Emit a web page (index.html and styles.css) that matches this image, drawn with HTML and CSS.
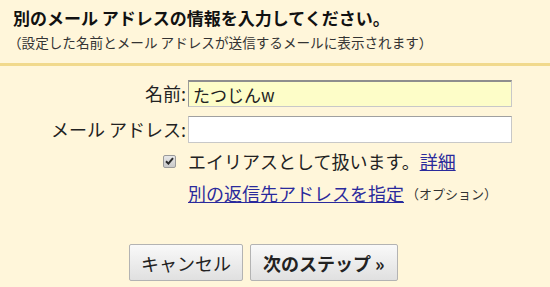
FILE: index.html
```html
<!DOCTYPE html>
<html lang="ja">
<head>
    <meta charset="UTF-8">
    <title>別のメール アドレス</title>
    <link rel="stylesheet" href="styles.css">
</head>
<body>
    <div class="dialog">
        <div class="head">
            <h1>別のメール アドレスの情報を入力してください。</h1>
            <p>（設定した名前とメール アドレスが送信するメールに表示されます）</p>
        </div>

        <form class="fields" action="#">
            <label for="name">名前:</label>
            <input id="name" class="text filled" type="text" value="たつじんw">
            <label for="mail">メール アドレス:</label>
            <input id="mail" class="text" type="text">

            <div class="opt">
                <span class="check">
                    <svg width="9" height="8" viewBox="0 0 9 8"><path d="M1 4.2 L3.4 6.6 L8 1.2" fill="none" stroke="#2b2b2b" stroke-width="2"/></svg>
                </span>
                <span>エイリアスとして扱います。</span><a href="#">詳細</a>
            </div>
            <div class="opt reply">
                <a href="#">別の返信先アドレスを指定</a><span class="note">（オプション）</span>
            </div>
        </form>

        <div class="buttons">
            <button type="button">キャンセル</button>
            <button type="button" class="next">次のステップ »</button>
        </div>
    </div>
</body>
</html>
```

FILE: styles.css
```css
body {
    margin: 0;
    background-color: #fff6da;
    font-family: "Noto Sans CJK JP", "Noto Sans", sans-serif;
    color: #222;
}

.dialog {
    width: 550px;
    height: 287px;
    overflow: hidden;
}

.head {
    padding: 7px 13px 11px;
    border-bottom: 3px solid #f1d98c;
}

.head h1 {
    margin: 0;
    font-size: 17px;
    line-height: 22px;
    font-weight: bold;
    color: #111;
}

.head p {
    margin: 3px 0 0 -5px;
    font-size: 13.6px;
    line-height: 20px;
    color: #333;
}

.fields {
    display: grid;
    grid-template-columns: 186px 324px;
    column-gap: 2px;
    row-gap: 9px;
    margin-top: 14px;
    font-size: 18px;
}

.fields label {
    text-align: right;
    line-height: 27px;
}

.text {
    box-sizing: border-box;
    height: 27px;
    margin: 0;
    padding: 0 4px;
    font: inherit;
    font-size: 17px;
    color: #222;
    background: #fff;
    border: 1px solid #c8c8c8;
    border-top-color: #a0a0a0;
    outline: none;
}

.text.filled {
    background: #fdfdc8;
    border-top: 2px solid #8e8e8e;
    border-left-color: #9a9a9a;
}

.opt {
    grid-column: 2;
    display: flex;
    align-items: center;
    height: 22px;
    margin-top: -2px;
}

.opt.reply {
    margin-top: 1px;
}

.check {
    display: flex;
    align-items: center;
    justify-content: center;
    width: 13px;
    height: 13px;
    margin-left: -25px;
    margin-right: 12px;
    box-sizing: border-box;
    border: 1px solid #9a9a9a;
    border-radius: 2px;
    background: linear-gradient(#e8e8e8, #c9c9c9);
}

.opt a {
    color: #2a2a9c;
    text-decoration: underline;
}

.note {
    font-size: 13px;
    margin-left: 2px;
    color: #333;
}

.buttons {
    display: flex;
    gap: 7px;
    padding-left: 129px;
    margin-top: 40px;
}

.buttons button {
    height: 37px;
    padding: 0 11px;
    font-family: inherit;
    font-size: 18px;
    color: #222;
    background: linear-gradient(#f9f9f9, #e0e0e0);
    border: 1px solid #b3b3b3;
    border-radius: 2px;
}

.buttons .next {
    font-weight: bold;
    padding: 0 12px;
}
```
